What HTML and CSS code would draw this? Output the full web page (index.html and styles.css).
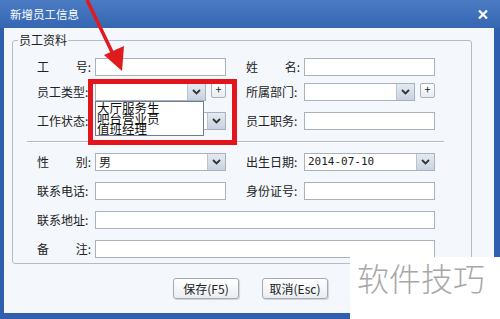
FILE: index.html
```html
<!DOCTYPE html>
<html lang="zh-CN">
<head>
    <meta charset="UTF-8">
    <title>新增员工信息</title>
    <link rel="stylesheet" href="styles.css">
</head>
<body>
<div class="window">
    <div class="titlebar">
        <span class="title">新增员工信息</span>
        <svg class="close" width="10" height="9" viewBox="0 0 10 9"><path d="M1 0.5 L9 8.5 M9 0.5 L1 8.5" stroke="#fff" stroke-width="2.2"/></svg>
    </div>
    <div class="body">
        <div class="group">
            <span class="legend">员工资料</span>

            <div class="row row-first">
                <label class="lbl"><span>工</span><span>号:</span></label>
                <div class="input"></div>
                <label class="lbl lbl-right"><span>姓</span><span>名:</span></label>
                <div class="input field-right"></div>
            </div>

            <div class="row">
                <label class="lbl">员工类型:</label>
                <div class="combo">
                    <div class="select open">
                        <span class="val"></span>
                        <span class="drop"><svg width="9" height="6" viewBox="0 0 9 6"><path d="M1 1 L4.5 4.5 L8 1" fill="none" stroke="#333" stroke-width="1.8"/></svg></span>
                        <div class="list">
                            <div>大厅服务生</div>
                            <div>吧台营业员</div>
                            <div>值班经理</div>
                        </div>
                    </div>
                    <span class="plus">+</span>
                </div>
                <label class="lbl lbl-right">所属部门:</label>
                <div class="combo field-right">
                    <div class="select">
                        <span class="val"></span>
                        <span class="drop"><svg width="9" height="6" viewBox="0 0 9 6"><path d="M1 1 L4.5 4.5 L8 1" fill="none" stroke="#333" stroke-width="1.8"/></svg></span>
                    </div>
                    <span class="plus">+</span>
                </div>
            </div>

            <div class="row">
                <label class="lbl">工作状态:</label>
                <div class="select">
                    <span class="val"></span>
                    <span class="drop"><svg width="9" height="6" viewBox="0 0 9 6"><path d="M1 1 L4.5 4.5 L8 1" fill="none" stroke="#333" stroke-width="1.8"/></svg></span>
                </div>
                <label class="lbl lbl-right">员工职务:</label>
                <div class="input field-right"></div>
            </div>

            <div class="sep"></div>

            <div class="row">
                <label class="lbl"><span>性</span><span>别:</span></label>
                <div class="select">
                    <span class="val">男</span>
                    <span class="drop"><svg width="9" height="6" viewBox="0 0 9 6"><path d="M1 1 L4.5 4.5 L8 1" fill="none" stroke="#333" stroke-width="1.8"/></svg></span>
                </div>
                <label class="lbl lbl-right">出生日期:</label>
                <div class="select field-right">
                    <span class="val date">2014-07-10</span>
                    <span class="drop"><svg width="9" height="6" viewBox="0 0 9 6"><path d="M1 1 L4.5 4.5 L8 1" fill="none" stroke="#333" stroke-width="1.8"/></svg></span>
                </div>
            </div>

            <div class="row">
                <label class="lbl">联系电话:</label>
                <div class="input"></div>
                <label class="lbl lbl-right">身份证号:</label>
                <div class="input field-right"></div>
            </div>

            <div class="row">
                <label class="lbl">联系地址:</label>
                <div class="input wide"></div>
            </div>

            <div class="row">
                <label class="lbl"><span>备</span><span>注:</span></label>
                <div class="input wide"></div>
            </div>
        </div>

        <div class="actions">
            <button class="btn">保存(F5)</button>
            <button class="btn">取消(Esc)</button>
        </div>
    </div>
</div>

<!-- annotation drawn over the screenshot -->
<div class="highlight"></div>
<svg class="arrow" width="500" height="319" viewBox="0 0 500 319">
    <line x1="87" y1="0" x2="112" y2="52" stroke="#e01b1e" stroke-width="3.5"/>
    <polygon points="122,71 104,55 124,46" fill="#e01b1e"/>
</svg>
<div class="watermark">软件技巧</div>
</body>
</html>
```

FILE: styles.css
```css
body {
    margin: 0;
    width: 500px;
    height: 319px;
    overflow: hidden;
    position: relative;
    font-family: "Noto Sans CJK SC", "Liberation Sans", sans-serif;
    font-size: 12px;
    color: #222;
}
.window {
    height: 319px;
    display: flex;
    flex-direction: column;
    background: #2f5fae;
}
.titlebar {
    height: 28px;
    flex: none;
    display: flex;
    align-items: center;
    justify-content: space-between;
    padding: 0 12px 0 10px;
    background: linear-gradient(#4a7bc3, #3566b2);
}
.title {
    color: #fff;
    font-size: 11.5px;
}
.body {
    flex: 1;
    margin: 0 6px 6px 4px;
    background: #f4f7fc;
}
.group {
    position: relative;
    margin: 12px 22px 0 8px;
    padding: 17px 0 5px 24px;
    border: 1px solid #b5bcc6;
    border-radius: 3px;
    display: flex;
    flex-direction: column;
    gap: 11px;
}
.legend {
    position: absolute;
    top: -9px;
    left: 5px;
    padding: 0 1px;
    background: #f4f7fc;
    line-height: 16px;
}
.row {
    display: grid;
    grid-template-columns: 54px 131px 12px 54px 131px;
    column-gap: 4px;
    height: 18px;
    align-items: center;
}
.row-first {
    height: 17px;
    margin-bottom: -3px;
}
.lbl {
    grid-column: 1;
    display: flex;
    justify-content: space-between;
    line-height: 18px;
    white-space: nowrap;
}
.lbl-right {
    grid-column: 4;
}
.field-right {
    grid-column: 5;
}
.input {
    height: 100%;
    box-sizing: border-box;
    border: 1px solid #a9b1bc;
    background: #fff;
}
.wide {
    grid-column: 2 / 6;
}
.select {
    position: relative;
    height: 18px;
    box-sizing: border-box;
    display: flex;
    border: 1px solid #a9b1bc;
    background: #fff;
}
.val {
    flex: 1;
    padding-left: 3px;
    line-height: 16px;
}
.date {
    font-family: "DejaVu Sans Mono", monospace;
    font-size: 11px;
}
.drop {
    width: 17px;
    display: flex;
    align-items: center;
    justify-content: center;
    border-left: 1px solid #b9c3d0;
    background: linear-gradient(#e4eaf2, #c8d2df);
}
.combo {
    display: flex;
    align-items: flex-start;
    gap: 5px;
}
.combo .select {
    flex: 1;
}
.plus {
    width: 15px;
    height: 15px;
    box-sizing: border-box;
    border: 1px solid #aab2bd;
    border-radius: 2px;
    background: linear-gradient(#ffffff, #e7ecf2);
    font-size: 11px;
    line-height: 11px;
    text-align: center;
}
.list {
    position: absolute;
    top: 17px;
    left: -1px;
    z-index: 2;
    width: 109px;
    height: 35px;
    box-sizing: border-box;
    padding: 1px 0 0 1px;
    border: 1px solid #6f7d8c;
    background: #fff;
    font-size: 12.5px;
    line-height: 10.5px;
    color: #111;
}
.sep {
    height: 1px;
    width: 417px;
    margin-left: -10px;
    background: #b3b9c2;
    box-shadow: 0 1px 0 #fff;
}
.actions {
    display: flex;
    justify-content: center;
    gap: 23px;
    margin-top: 14px;
    padding-left: 3px;
}
.btn {
    width: 66px;
    height: 21px;
    padding: 0;
    border: 1px solid #a3a9b1;
    border-radius: 3px;
    background: linear-gradient(#ffffff, #e9edf2);
    box-shadow: 1px 1px 1px rgba(0, 0, 0, 0.15);
    font-family: "Noto Sans CJK SC", sans-serif;
    font-size: 12px;
    color: #222;
}
.highlight {
    position: absolute;
    left: 88px;
    top: 79px;
    width: 149px;
    height: 66px;
    box-sizing: border-box;
    border: 5px solid #e3151b;
    z-index: 3;
}
.arrow {
    position: absolute;
    left: 0;
    top: 0;
    z-index: 4;
}
.watermark {
    position: absolute;
    left: 350px;
    top: 257px;
    right: 0;
    bottom: 0;
    z-index: 5;
    padding: 4px 0 0 7px;
    background: #fff;
    color: #a8a8a8;
    font-size: 32px;
    font-weight: 300;
    line-height: 32px;
}
```
